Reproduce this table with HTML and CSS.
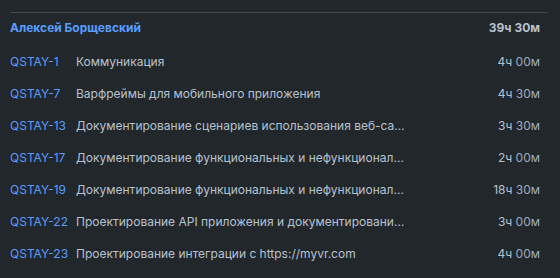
FILE: index.html
```html
<!DOCTYPE html>
<html lang="ru">
<head>
<meta charset="utf-8">
<link rel="stylesheet" href="styles.css">
</head>
<body>
<div class="panel">
  <div class="group-head">
    <span class="name">Алексей Борщевский</span>
    <span class="total"><span class="h">39ч</span> <span class="m">30м</span></span>
  </div>
  <div class="rows">
    <div class="row"><a class="key">QSTAY-1</a><span class="sum">Коммуникация</span><span class="time"><span class="h">4ч</span> <span class="m">00м</span></span></div>
    <div class="row"><a class="key">QSTAY-7</a><span class="sum">Варфреймы для мобильного приложения</span><span class="time"><span class="h">4ч</span> <span class="m">30м</span></span></div>
    <div class="row"><a class="key">QSTAY-13</a><span class="sum">Документирование сценариев использования веб-сайта и мобильного приложения</span><span class="time"><span class="h">3ч</span> <span class="m">30м</span></span></div>
    <div class="row"><a class="key">QSTAY-17</a><span class="sum">Документирование функциональных и нефункциональных требований</span><span class="time"><span class="h">2ч</span> <span class="m">00м</span></span></div>
    <div class="row"><a class="key">QSTAY-19</a><span class="sum">Документирование функциональных и нефункциональных требований</span><span class="time"><span class="h">18ч</span> <span class="m">30м</span></span></div>
    <div class="row"><a class="key">QSTAY-22</a><span class="sum">Проектирование API приложения и документирование интеграций</span><span class="time"><span class="h">3ч</span> <span class="m">00м</span></span></div>
    <div class="row"><a class="key">QSTAY-23</a><span class="sum">Проектирование интеграции с https://myvr.com</span><span class="time"><span class="h">4ч</span> <span class="m">00м</span></span></div>
  </div>
</div>
</body>
</html>
```
FILE: styles.css
```css
html, body {
  margin: 0;
  padding: 0;
  background: #22272b;
}
body {
  font-family: Inter, "Noto Sans", sans-serif;
  font-size: 12px;
  color: #b6c2cf;
}
.panel {
  margin: 12px 12px 0 10px;
  border-top: 1px solid #3f4c4f;
}
.group-head {
  display: flex;
  justify-content: space-between;
  align-items: center;
  height: 28px;
  padding: 0 8px 0 0;
  font-weight: 700;
}
.group-head .name { color: #579dff; }
.group-head .total .h, .group-head .total .m { color: #b6c2cf; }
.rows {
  padding-top: 4px;
}
.row {
  display: grid;
  grid-template-columns: 66px 1fr 135px;
  align-items: center;
  height: 32px;
  padding-right: 8px;
}
.key { color: #579dff; }
.sum {
  white-space: nowrap;
  overflow: hidden;
  text-overflow: ellipsis;
}
.time { text-align: right; }
.time .h { color: #b6c2cf; }
.time .m { color: #9fadbc; }
```
